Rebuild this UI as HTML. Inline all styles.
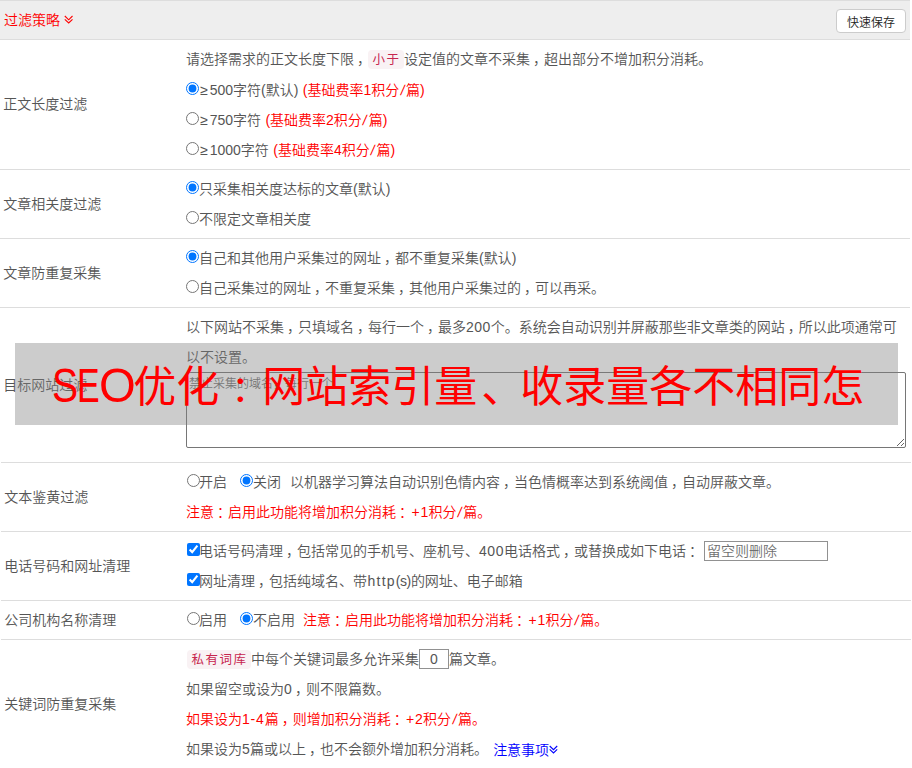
<!DOCTYPE html>
<html lang="zh-CN">
<head>
<meta charset="utf-8">
<title>过滤策略</title>
<style>
*{box-sizing:border-box}
html,body{margin:0;padding:0;background:#fff}
body{width:912px;height:768px;overflow:hidden;position:relative;font-family:"Liberation Sans","Noto Sans CJK SC",sans-serif;font-weight:350;font-size:14px;color:#555;line-height:30px}
.hd{position:absolute;left:0;top:0;width:910px;height:40px;background:#eee;border-top:1px solid #ddd;border-bottom:1px solid #ddd}
.hd .t{position:absolute;left:4px;top:4px;color:#f00;line-height:30px}
.btn{position:absolute;left:836px;top:8px;width:70px;height:24px;border:1px solid #ccc;border-radius:4px;background:#fff;color:#222;font-size:12px;line-height:27px;text-align:center}
table{position:absolute;left:0;top:40px;width:910px;border-collapse:collapse;table-layout:fixed}
td{padding:4px 0 4px 4px;border-bottom:1px solid #ddd;vertical-align:middle}
td.l{width:182px;padding-left:3.3px}
table.t2{left:1px;top:462px}
table.t2 td.c{padding-left:3px}
table.t2 tr:first-child td{border-top:1px solid #ddd}
tr.nb td{border-bottom:0}
td.c{padding-left:4px}
.r{color:#f00}
s{position:relative;left:3px;text-decoration:none}
.ln{height:30px;white-space:nowrap}
input[type=radio],input[type=checkbox]{margin:0;width:13px;height:13px;vertical-align:baseline;position:relative;top:0}
input.x1{left:1px}
input[type=text]{position:relative;top:-1.3px}
code{display:inline-block;height:19px;line-height:21px;vertical-align:0;font-family:inherit;font-weight:400;font-size:12.5px;letter-spacing:1.5px;color:#c7254e;background:#f9f2f4;padding:0 3px 0 4px;border-radius:4px;text-align:center}
.d{letter-spacing:.25px}
.ge{margin:0 1.7px 0 1.3px}
.sl{display:inline-block;margin:0 1.5px;transform:skewX(-10deg)}
.pl{margin:0 .8px 0 1.4px}
.g13{display:inline-block;width:13px}
.g9{display:inline-block;width:9px}
.ov{position:absolute;left:15px;top:343px;width:883px;height:82px;background:rgba(128,128,128,.4)}
.ovt{position:absolute;left:52.5px;top:347px;height:81px;line-height:81px;font-size:43px;font-weight:400;color:#f00;white-space:nowrap}
.ovt u{position:relative;text-decoration:none}
.ovt i{display:inline-block;width:80.8px;height:10px}
.ovt b{font-weight:400;position:absolute;top:0;transform-origin:0 72%}
textarea,input{font-family:inherit;font-weight:inherit}
textarea{display:block;width:720px;height:76px;margin:0;padding:2px 2px;border:1px solid #767676;border-radius:2px;font-size:12px;line-height:18px;color:#555;background:#fff;outline:none}
input[type=text]{height:20px;border:1px solid #919191;padding:1px 2px;font-size:14px;color:#555;vertical-align:middle;margin:0;outline:none;background:#fff}
::placeholder{color:#707070;opacity:1}
.chev{display:inline-block;vertical-align:middle}
</style>
</head>
<body>
<div class="hd"><span class="t">过滤策略</span><span class="btn">快速保存</span></div>
<table>
<tr><td class="l"><span style="position:relative;top:-1px">正文长度过滤</span></td><td class="c">
<div class="ln" style="height:31px">请选择需求的正文长度下限<s>，</s><code style="width:36px">小于</code>设定值的文章不采集<s>，</s>超出部分不增加积分消耗。</div>
<div class="ln"><input type="radio" checked><span class="ge">≥</span>500字符(默认) <span class="r" style="margin-left:.5px">(基础费率1积分<span class="sl">/</span>篇)</span></div>
<div class="ln"><input type="radio"><span class="ge">≥</span>750字符 <span class="r" style="margin-left:.5px">(基础费率2积分<span class="sl">/</span>篇)</span></div>
<div class="ln"><input type="radio"><span class="ge">≥</span>1000字符 <span class="r" style="margin-left:.5px">(基础费率4积分<span class="sl">/</span>篇)</span></div>
</td></tr>
<tr><td class="l">文章相关度过滤</td><td class="c">
<div class="ln"><input type="radio" checked>只采集相关度达标的文章(默认)</div>
<div class="ln"><input type="radio">不限定文章相关度</div>
</td></tr>
<tr><td class="l">文章防重复采集</td><td class="c">
<div class="ln"><input type="radio" checked>自己和其他用户采集过的网址<s>，</s>都不重复采集(默认)</div>
<div class="ln"><input type="radio">自己采集过的网址<s>，</s>不重复采集<s>，</s>其他用户采集过的<s>，</s>可以再采。</div>
</td></tr>
<tr class="nb"><td class="l">目标网站过滤</td><td class="c">
<div style="white-space:normal;width:716px;height:60px">以下网站不采集<s>，</s>只填域名<s>，</s>每行一个<s>，</s>最多<span class="d" style="letter-spacing:.5px">200</span>个。系统会自动识别并屏蔽那些非文章类的网站<s>，</s>所以此项通常可<br>以不设置。</div>
<div style="height:86px"><textarea placeholder="禁止采集的域名，每行一个"></textarea></div>
</td></tr>
</table>
<table class="t2">
<tr><td class="l" >文本鉴黄过滤</td><td class="c">
<div class="ln"><input type="radio" class="x1">开启<span class="g13"></span><input type="radio" checked>关闭<span class="g9"></span>以机器学习算法自动识别色情内容<s>，</s>当色情概率达到系统阈值<s>，</s>自动屏蔽文章。</div>
<div class="ln r">注意<s>：</s>启用此功能将增加积分消耗<s>：</s><span class="pl">+</span><span class="d">1</span>积分<span class="sl">/</span>篇。</div>
</td></tr>
<tr><td class="l" >电话号码和网址清理</td><td class="c">
<div class="ln"><input type="checkbox" class="x1" checked>电话号码清理<s>，</s>包括常见的手机号、座机号、<span class="d" style="letter-spacing:.55px">400</span>电话格式<s>，</s>或替换成如下电话<s>：</s> <input type="text" placeholder="留空则删除" style="width:124px"></div>
<div class="ln"><input type="checkbox" class="x1" checked>网址清理<s>，</s>包括纯域名、带<span style="letter-spacing:1.2px;margin-left:.6px">http</span><span style="letter-spacing:-.4px">(s)</span>的网址、电子邮箱</div>
</td></tr>
<tr><td class="l" >公司机构名称清理</td><td class="c">
<div class="ln"><input type="radio" class="x1">启用<span class="g13"></span><input type="radio" checked>不启用<span class="g9" style="width:8px"></span><span class="r">注意<s>：</s>启用此功能将增加积分消耗<s>：</s><span class="pl">+</span><span class="d">1</span>积分<span class="sl">/</span>篇。</span></div>
</td></tr>
<tr><td class="l" >关键词防重复采集</td><td class="c">
<div class="ln"><code style="width:64px;margin-left:1px">私有词库</code>中每个关键词最多允许采集<input type="text" value="0" style="width:30px;text-align:center;font-size:14px">篇文章。</div>
<div class="ln">如果留空或设为<span class="d">0</span><s>，</s>则不限篇数。</div>
<div class="ln r">如果设为<span style="letter-spacing:.8px">1-4</span>篇<s>，</s>则增加积分消耗<s>：</s><span class="pl">+</span><span class="d">2</span>积分<span class="sl">/</span>篇。</div>
<div class="ln">如果设为<span class="d">5</span>篇或以上<s>，</s>也不会额外增加积分消耗。 <span style="color:#00f;position:relative;top:1px;left:1.2px">注意事项</span></div>
</td></tr>
</table>
<svg style="position:absolute;left:63.5px;top:15px" width="9" height="9" viewBox="0 0 9 9"><path d="M.8 1 L4.7 4.8 L8.5 1 M.8 4.3 L4.7 8 L8.5 4.3" fill="none" stroke="#f00" stroke-width="1.1"/></svg>
<svg style="position:absolute;left:549.3px;top:745px" width="9" height="9" viewBox="0 0 9 9"><path d="M.7 1 L4.5 4.7 L8.2 1 M.7 4.3 L4.5 8 L8.2 4.3" fill="none" stroke="#00f" stroke-width="1.1"/></svg>
<div class="ov"></div>
<div class="ovt"><i></i><b style="left:-.8px;transform:scale(.91,1.135)">S</b><b style="left:24.8px;transform:scale(.79,1.135)">E</b><b style="left:46.8px;transform:scale(1.1,1.135)">O</b>优化<u style="left:8.7px;top:1.5px;display:inline-block;transform:scale(.85)">：</u>网站索引量<u style="left:4px">、</u>收录量各不相同怎</div>
</body>
</html>
